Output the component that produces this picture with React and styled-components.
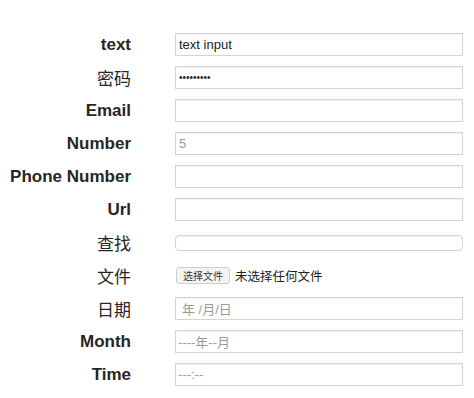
import React from 'react';
import styled, { createGlobalStyle } from 'styled-components';

const GlobalStyle = createGlobalStyle`
    body {
        margin: 8px;
        background: #fff;
        font-family: "Liberation Sans", "Noto Sans CJK SC", sans-serif;
        color: #222;
    }
`;

const Form = styled.form`
    display: grid;
    grid-template-columns: 123px 288px;
    grid-auto-rows: 23px;
    column-gap: 44px;
    row-gap: 10px;
    padding-top: 25px;
`;

const Label = styled.label`
    display: flex;
    align-items: center;
    justify-content: flex-end;
    font-size: 17px;
    font-weight: ${props => (props.cjk ? 'normal' : 'bold')};
    font-family: ${props => (props.cjk
        ? '"Noto Sans CJK SC", sans-serif'
        : '"Liberation Sans", "Noto Sans CJK SC", sans-serif')};
    color: #262626;
    white-space: nowrap;
`;

const Cell = styled.div`
    display: flex;
    align-items: center;
`;

const Input = styled.input`
    box-sizing: border-box;
    width: 100%;
    height: ${props => (props.short ? '16px' : '23px')};
    margin: 0;
    padding: 0 3px;
    border: 1px solid #d4d4d4;
    border-radius: ${props => (props.short ? '4px' : '0')};
    box-shadow: inset 0 1px 1px rgba(0, 0, 0, 0.06);
    font-family: "Liberation Sans", "Noto Sans CJK SC", sans-serif;
    font-size: 13px;
    color: #222;
    outline: none;

    &::placeholder {
        color: #999;
    }
`;

const PasswordInput = styled(Input)`
    font-size: 10px;
    letter-spacing: 0;
`;

const FakeField = styled.div`
    box-sizing: border-box;
    width: 100%;
    height: 23px;
    display: flex;
    align-items: center;
    padding: 0 ${props => props.pad || 4}px;
    border: 1px solid #d4d4d4;
    box-shadow: inset 0 1px 1px rgba(0, 0, 0, 0.06);
    font-family: "Liberation Sans", "Noto Sans CJK SC", sans-serif;
    font-size: 13px;
    color: #9a9a9a;
    white-space: pre;
`;

const FileButton = styled.button`
    height: 17px;
    padding: 0 6px;
    margin: 0 5px 0 1px;
    border: 1px solid #cfcfcf;
    border-radius: 3px;
    background: #f3f3f3;
    font-family: "Noto Sans CJK SC", sans-serif;
    font-size: 10px;
    color: #333;
    line-height: 15px;
`;

const FileStatus = styled.span`
    font-family: "Noto Sans CJK SC", sans-serif;
    font-size: 12.5px;
    color: #222;
`;

const App = () => {
    return (
        <>
            <GlobalStyle />
            <Form onSubmit={e => e.preventDefault()}>
                <Label>text</Label>
                <Cell><Input type="text" defaultValue="text input" /></Cell>

                <Label cjk>密码</Label>
                <Cell><PasswordInput type="password" defaultValue="123456789" /></Cell>

                <Label>Email</Label>
                <Cell><Input type="email" /></Cell>

                <Label>Number</Label>
                <Cell><Input type="text" placeholder="5" /></Cell>

                <Label>Phone Number</Label>
                <Cell><Input type="tel" /></Cell>

                <Label>Url</Label>
                <Cell><Input type="url" /></Cell>

                <Label cjk>查找</Label>
                <Cell><Input type="search" short /></Cell>

                <Label cjk>文件</Label>
                <Cell>
                    <FileButton type="button">选择文件</FileButton>
                    <FileStatus>未选择任何文件</FileStatus>
                </Cell>

                <Label cjk>日期</Label>
                <Cell><FakeField pad={6}>年 /月/日</FakeField></Cell>

                <Label>Month</Label>
                <Cell><FakeField pad={2}>----年--月</FakeField></Cell>

                <Label>Time</Label>
                <Cell><FakeField pad={2}>---:--</FakeField></Cell>
            </Form>
        </>
    );
};

export default App;
